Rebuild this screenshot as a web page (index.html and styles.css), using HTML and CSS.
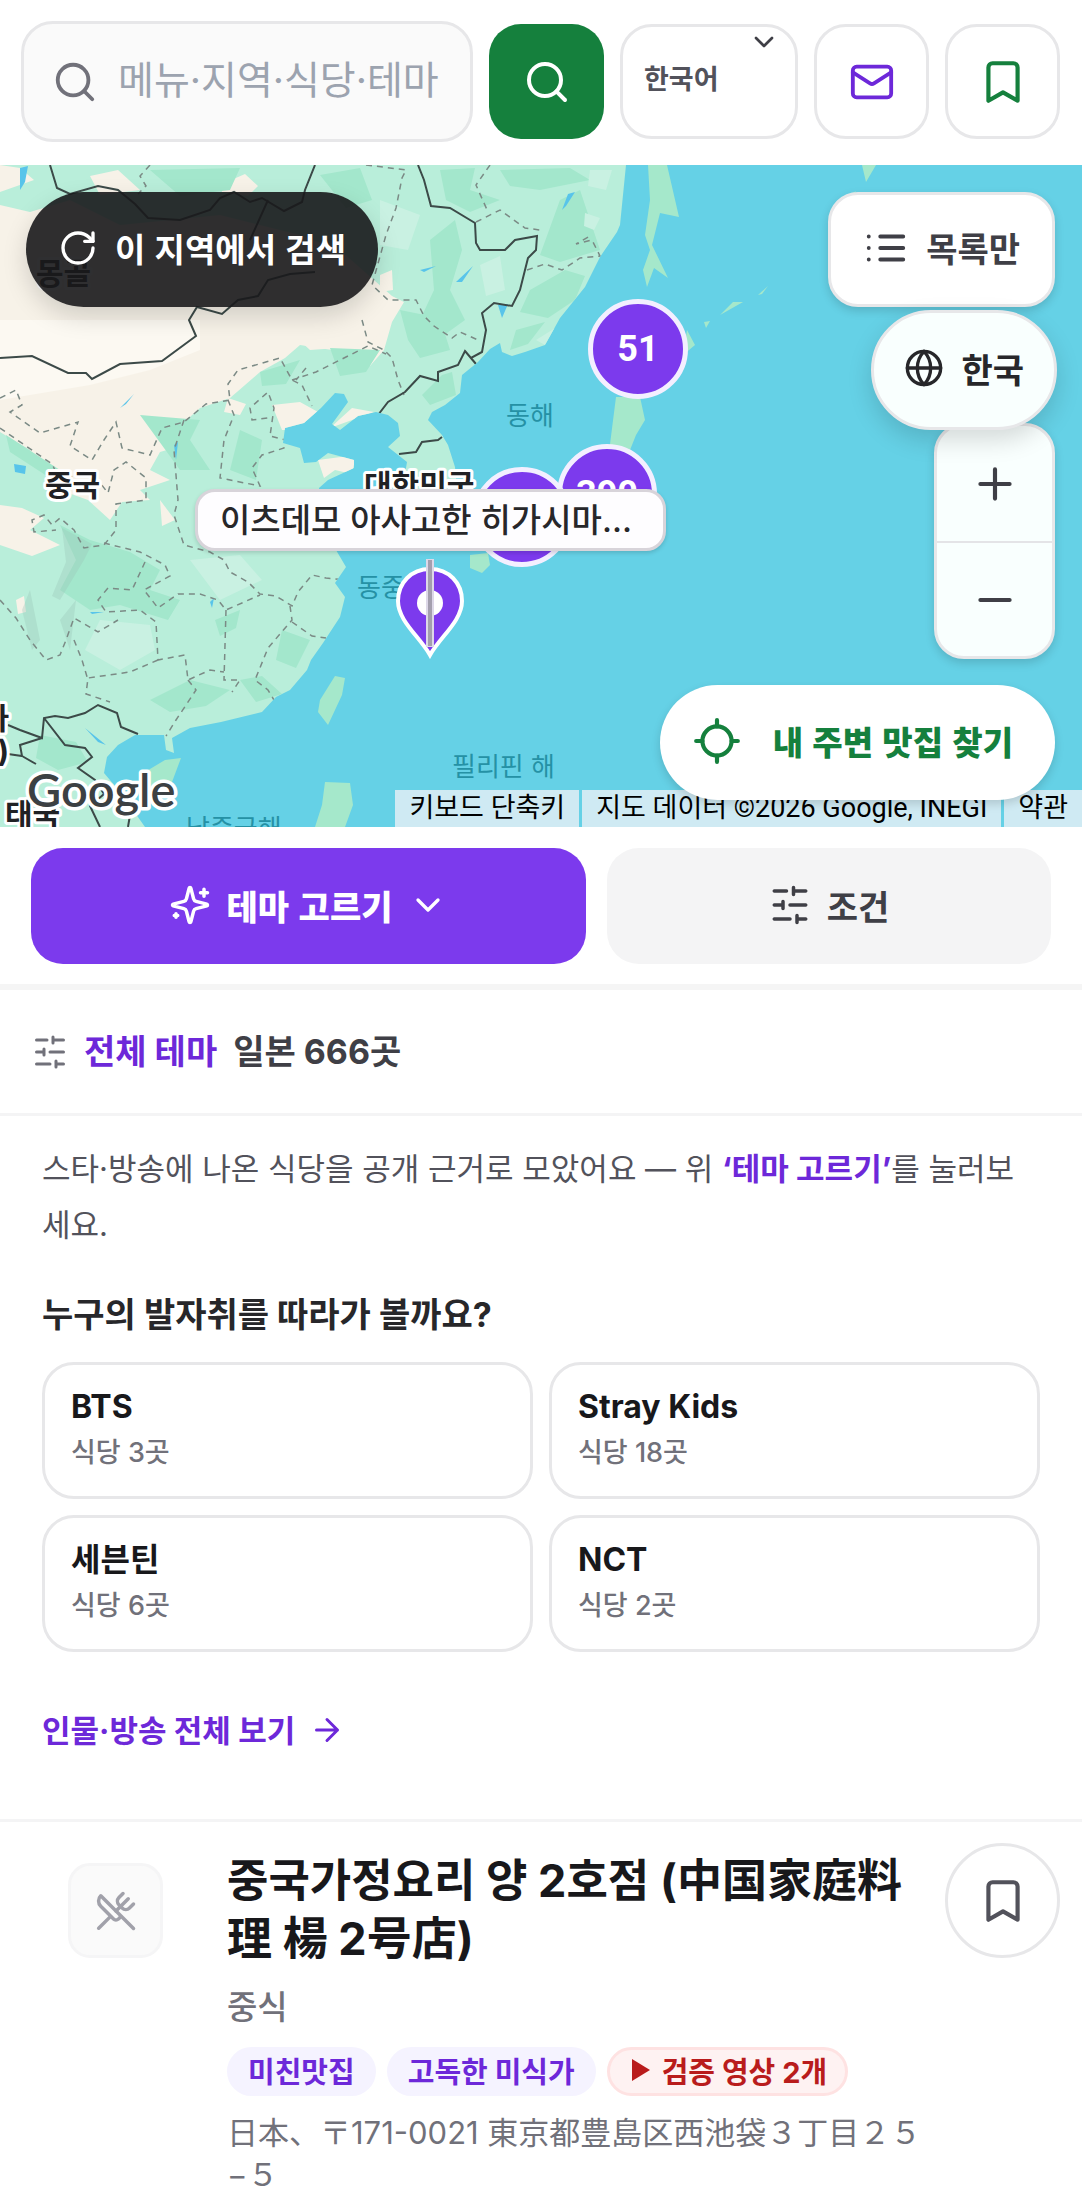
FILE: index.html
```html
<!DOCTYPE html>
<html lang="ko">
<head>
  <meta charset="UTF-8">
  <meta name="viewport" content="width=device-width, initial-scale=1.0">
  <title>맛집 지도</title>
  <link rel="stylesheet" href="styles.css">
</head>
<body>
  <!-- shared icons -->
  <svg class="sprite" aria-hidden="true">
    <symbol id="i-search" viewBox="0 0 24 24"><circle cx="11" cy="11" r="8"/><path d="m21 21-4.3-4.3"/></symbol>
    <symbol id="i-chevron" viewBox="0 0 24 24"><path d="m6 9 6 6 6-6"/></symbol>
    <symbol id="i-mail" viewBox="0 0 24 24"><rect x="2" y="4" width="20" height="16" rx="2"/><path d="m22 7-8.97 5.7a1.94 1.94 0 0 1-2.06 0L2 7"/></symbol>
    <symbol id="i-bookmark" viewBox="0 0 24 24"><path d="m19 21-7-4-7 4V5a2 2 0 0 1 2-2h10a2 2 0 0 1 2 2v16z"/></symbol>
    <symbol id="i-rotate" viewBox="0 0 24 24"><path d="M21 12a9 9 0 1 1-9-9c2.52 0 4.93 1 6.74 2.74L21 8"/><path d="M21 3v5h-5"/></symbol>
    <symbol id="i-list" viewBox="0 0 24 24"><path d="M3 6h.01M3 12h.01M3 18h.01M9 6h12M9 12h12M9 18h12"/></symbol>
    <symbol id="i-globe" viewBox="0 0 24 24"><circle cx="12" cy="12" r="10"/><path d="M12 2a14.5 14.5 0 0 0 0 20 14.5 14.5 0 0 0 0-20M2 12h20"/></symbol>
    <symbol id="i-plus" viewBox="0 0 24 24"><path d="M5 12h14M12 5v14"/></symbol>
    <symbol id="i-minus" viewBox="0 0 24 24"><path d="M5 12h14"/></symbol>
    <symbol id="i-locate" viewBox="0 0 24 24"><path d="M2 12h3M19 12h3M12 2v3M12 19v3"/><circle cx="12" cy="12" r="7"/></symbol>
    <symbol id="i-sparkles" viewBox="0 0 24 24"><path d="M9.937 15.5A2 2 0 0 0 8.5 14.063l-6.135-1.582a.5.5 0 0 1 0-.962L8.5 9.936A2 2 0 0 0 9.937 8.5l1.582-6.135a.5.5 0 0 1 .963 0L14.063 8.5A2 2 0 0 0 15.5 9.937l6.135 1.581a.5.5 0 0 1 0 .964L15.5 14.063a2 2 0 0 0-1.437 1.437l-1.582 6.135a.5.5 0 0 1-.963 0z"/><path d="M20 3v4M22 5h-4M4 17v2M5 18H3"/></symbol>
    <symbol id="i-sliders" viewBox="0 0 24 24"><path d="M21 4h-7M10 4H3M21 12h-9M8 12H3M21 20h-5M12 20H3M14 2v4M8 10v4M16 18v4"/></symbol>
    <symbol id="i-arrow" viewBox="0 0 24 24"><path d="M5 12h14M12 5l7 7-7 7"/></symbol>
    <symbol id="i-utensils" viewBox="0 0 24 24"><path d="m16 2-2.3 2.3a3 3 0 0 0 0 4.2l1.8 1.8a3 3 0 0 0 4.2 0L22 8"/><path d="M15 15 3.3 3.3a4.2 4.2 0 0 0 0 6l7.3 7.3c.7.7 2 .7 2.8 0L15 15Zm0 0 7 7"/><path d="m2.1 21.8 6.4-6.3M19 5l-7 7"/></symbol>
  </svg>

  <header class="header">
    <form class="search">
      <label class="search-box">
        <svg class="icon icon-46"><use href="#i-search"/></svg>
        <input class="search-input" type="text" placeholder="메뉴·지역·식당·테마" aria-label="메뉴·지역·식당·테마">
      </label>
      <button class="square-btn square-btn-green" type="button" aria-label="검색"><svg class="icon icon-48"><use href="#i-search"/></svg></button>
    </form>
    <div class="lang">
      <select class="lang-select" aria-label="언어">
        <option>한국어</option>
      </select>
      <svg class="icon icon-32 lang-chevron"><use href="#i-chevron"/></svg>
    </div>
    <button class="square-btn square-btn-purple" type="button" aria-label="문의"><svg class="icon icon-46"><use href="#i-mail"/></svg></button>
    <button class="square-btn square-btn-saved" type="button" aria-label="저장한 곳"><svg class="icon icon-50"><use href="#i-bookmark"/></svg></button>
  </header>

  <section class="map">
    <svg class="map-canvas" viewBox="0 165 1082 662" preserveAspectRatio="xMidYMid slice">
      <defs>
        <clipPath id="mainland">
          <path d="M0 165H626L620 225 617 232 600 257 585 287 560 318 545 345 525 352 512 356 502 352 500 343 490 349 478 362 462 375 460 393 445 405 432 412 428 420 442 435 448 445 455 467 457 490 440 512 410 512 404 480 407 462 388 447 400 436 398 423 388 415 376 412 358 416 340 430 332 424 348 402 344 394 335 393 321 408 304 423 285 428 283 443 300 448 304 463 316 462 328 453 354 460 354 468 328 480 319 488 322 520 336 550 346 567 335 583 345 597 340 617 323 643 311 660 307 670 290 690 276 697 262 712 221 722 190 728 172 738 174 753 166 750 164 735 135 735 118 745 107 757 104 773 121 793 145 827H0Z"/>
        </clipPath>
      </defs>
      <rect y="165" width="1082" height="662" fill="#65d1e6"/>
      <g clip-path="url(#mainland)">
        <rect y="165" width="640" height="662" fill="#b9eeda"/>
        <g fill="#f7f2e8">
          <path d="M0 205 30 212 70 200 120 225 220 215 300 235 340 250 392 296 404 302 392 322 384 350 370 366 345 352 300 345 285 358 260 372 230 398 200 408 182 424 184 445 160 452 150 470 170 480 140 490 150 500 122 502 110 520 88 500 60 490 30 450 0 432Z"/>
          <path d="M0 505 22 508 44 518 30 530 60 545 32 556 0 545ZM222 184 245 174 258 186 248 196 222 192ZM380 275 392 270 393 290 380 292ZM286 328 360 305 384 330 366 346 310 350ZM160 500 175 520 162 526ZM318 460 356 455 352 474 335 470 324 478ZM0 165 20 168 34 180 0 192ZM90 176 118 170 140 190 100 195Z"/>
          <path d="M272 405 300 402 318 412 298 430 282 430ZM330 428 352 408 374 412ZM228 398 246 404 240 415 224 412ZM330 635 345 620 336 640 322 648ZM16 600 24 596 26 612 18 614Z"/>
        </g>
        <path d="M0 320H200V350L150 370 90 385 0 400Z" fill="#fcf9f2"/>
        <g fill="#a3e7cc">
          <path d="M430 240 455 220 462 250 450 290 465 320 440 338 420 320 434 290ZM560 200 580 190 590 220 600 250 560 262 540 255ZM530 290 565 270 585 276 575 300 548 318 520 312ZM400 310 440 318 450 350 420 358 408 340ZM150 170 240 168 230 190 180 196ZM320 175 360 168 372 200 346 208ZM440 170 475 168 470 190 500 200 470 212 446 200Z"/>
          <path d="M60 525 90 540 130 552 160 570 150 590 180 600 168 620 120 605 90 610 60 590 76 560ZM6 435 60 470 50 478 10 452ZM215 620 240 610 236 628 220 636ZM150 700 190 680 230 690 206 706 170 712ZM240 680 262 676 282 694 256 702ZM40 735 76 742 88 762 58 770 36 758ZM282 630 310 640 296 668 276 660ZM140 415 200 420 190 440 210 470 180 470ZM240 430 262 440 256 480 230 470Z"/>
          <path d="M442 375 452 372 456 395 430 405 422 395ZM500 170 570 168 590 180 540 190 510 186ZM516 330 545 322 528 344 510 350ZM260 372 300 360 286 384 262 386ZM330 348 380 350 366 372 340 376Z"/>
        </g>
        <g fill="#c9f1e2">
          <path d="M100 620 150 625 155 650 120 670 85 650ZM190 560 240 555 262 580 220 600ZM380 200 420 215 408 250 380 245ZM480 265 500 256 505 290 486 296ZM590 170 612 170 606 190 588 186ZM585 213 600 218 594 230 584 226ZM560 325 545 345 536 340Z"/>
        </g>
        <g fill="#9cc6b6" opacity=".35">
          <path d="M62 528 92 544 84 560 60 600 52 596 66 562ZM30 590 40 640 32 650 22 610ZM60 620 76 600 70 650Z"/>
        </g>
        <g fill="#58c4ea">
          <path d="M20 168 28 166 25 182 20 190ZM14 464 26 466 25 474 15 472ZM120 408 134 394 126 404ZM498 305 508 304 502 318ZM568 194 575 192 566 206 562 210ZM420 270 436 266 424 272ZM456 282 473 266 462 282ZM174 445 178 442 176 460ZM85 728 106 745 98 742ZM90 612 104 612 92 614ZM210 602 214 598 212 608Z"/>
        </g>
        <g class="province">
          <path d="M0 398 16 390 22 405 10 412 40 433 78 422 70 446 92 460 104 440 116 422 122 448 150 455 162 428 184 422 206 404 230 400 228 384 238 370 280 358 292 380 302 385 312 406"/>
          <path d="M228 400 234 415 224 440 220 478 260 486 252 468 262 455 284 448 286 440 270 436 274 408 268 392 250 408 252 420 268 418"/>
          <path d="M0 428 52 464 60 480 90 470 108 493 114 470 126 462 146 478 146 500 116 504 116 530 104 545 84 548 74 530 60 518 52 525 44 515 32 520 34 532 56 530"/>
          <path d="M184 420 174 450 178 500 174 515 184 545 210 552 224 560 230 572 248 582 260 594 276 596 292 606 298 592 312 575 326 578 346 580"/>
          <path d="M104 543 140 552 165 565 170 576 144 590 158 608 178 594 200 594 218 600 226 610 260 595M226 610 224 680 240 680 232 692M290 606 292 620 268 648 255 680 268 690 274 700M292 622 312 636 326 638"/>
          <path d="M145 562 132 590 108 588 98 600 106 612 140 610 156 622 158 660 185 655 188 680 210 670 224 672M158 660 130 672 88 678 86 694 110 702M188 680 196 690 176 720 166 736"/>
          <path d="M0 600 16 618 30 640 46 660 60 655 66 640 74 618 98 632 118 620M74 640 82 660 88 680"/>
          <path d="M366 165 406 170 402 178 396 208 386 235 372 285 388 300 416 300 424 316 434 326 452 338 460 332 478 340M362 320 368 342 384 350 392 358 398 380 404 395M490 165 476 185 488 212M476 222 500 210 525 228 540 230M527 270 545 264 562 270 580 258 600 256 592 240 576 244 590 236"/>
          <path d="M150 165 140 176 146 186 138 194M292 380 316 372 340 360 368 346 386 354M306 368 296 380"/>
        </g>
        <g class="border">
          <path d="M50 165 57 188 70 194 98 186 118 190 135 204 148 218 180 220 210 210 220 198 234 192 250 202 262 198 284 211 302 202 305 190 315 165M268 200 250 240"/>
          <path d="M0 358 32 356 68 373 86 373 92 379 120 364 162 361 196 336 189 320 197 307 222 314 238 300 258 296 268 280 290 274 315 272"/>
          <path d="M418 165 424 180 431 206 450 208 475 223 476 243 480 250 505 250 515 240 537 236 536 250 528 258 520 290 512 306 494 303 482 313 486 330 482 352 471 358 465 351 458 365 438 372 438 381 420 376 405 392 388 402 378 415M465 351 476 364"/>
          <path d="M399 454 416 452 422 442 438 440 442 437M138 734 121 727 117 713 98 705 85 713 68 718 55 716 44 718 42 738 20 730 8 725M44 718 65 745 85 748 92 757 78 768 95 780 104 794 90 806 100 827M42 738 20 745 22 756 8 754M22 756 36 764M128 827 130 815"/>
        </g>
      </g>
      <g fill="#a5e8cb">
        <path d="M648 165H667L679 217 660 213 652 245 668 278 654 268 647 287 643 270 650 250 645 235 650 200Z"/>
        <path d="M687 330 695 345 683 355ZM616 397H640L645 420 636 435 630 450 608 460ZM720 315 733 302 743 302ZM758 295 768 286 762 294ZM704 322 710 321 706 328ZM862 165H876L866 182ZM844 198 856 191 850 200Z"/>
        <path d="M320 700 335 676 345 678 342 695 328 725 318 712ZM145 772 165 760 181 758 172 782 155 790 146 784ZM325 782 350 783 353 805 345 827H315L322 805ZM470 555 488 553 490 565 482 573 470 568Z"/>
      </g>
      <g class="map-country">
        <text x="36" y="284">몽골</text>
        <text x="45" y="496">중국</text>
        <text x="364" y="496">대한민국</text>
        <text x="5" y="825">태국</text>
        <text x="9" y="729" text-anchor="end">(미얀마</text>
        <text x="9" y="762" text-anchor="end">버마)</text>
      </g>
      <g class="map-sea">
        <text x="506" y="425">동해</text>
        <text x="357" y="597">동중국해</text>
        <text x="452" y="776">필리핀 해</text>
        <text x="186" y="838">남중국해</text>
      </g>
      <text class="map-logo" x="27" y="807">Google</text>
    </svg>

    <button class="cluster cluster-tokyo" type="button">390</button>
    <button class="cluster cluster-osaka" type="button">225</button>
    <button class="cluster cluster-hokkaido" type="button">51</button>
    <svg class="pin" viewBox="0 0 72 104">
      <path d="M36 14C17 14 4 28 4 46c0 20 22 36 32 54 10-18 32-34 32-54C68 28 55 14 36 14Z" fill="#7c3aed" stroke="#fff" stroke-width="4"/>
      <circle cx="36" cy="48" r="13" fill="#fff"/>
      <path d="M36 4v88" stroke="#ddd8e8" stroke-width="8"/>
      <path d="M36 5v86" stroke="#a49fae" stroke-width="4"/>
    </svg>
    <div class="pin-label">이츠데모 아사고한 히가시마…</div>

    <button class="area-btn" type="button"><svg class="icon icon-40"><use href="#i-rotate"/></svg>이 지역에서 검색</button>

    <div class="zoom">
      <button class="zoom-btn" type="button" aria-label="확대"><svg class="icon icon-50"><use href="#i-plus"/></svg></button>
      <button class="zoom-btn" type="button" aria-label="축소"><svg class="icon icon-50"><use href="#i-minus"/></svg></button>
    </div>
    <button class="list-btn" type="button"><svg class="icon icon-46"><use href="#i-list"/></svg>목록만</button>
    <button class="country-btn" type="button"><svg class="icon icon-40"><use href="#i-globe"/></svg>한국</button>

    <div class="credits">
      <button class="credit" type="button">키보드 단축키</button>
      <span class="credit">지도 데이터 ©2026 Google, INEGI</span>
      <a class="credit" href="#">약관</a>
    </div>
    <button class="nearby-btn" type="button"><svg class="icon icon-50"><use href="#i-locate"/></svg>내 주변 맛집 찾기</button>
  </section>

  <main>
    <div class="toolbar">
      <button class="tool tool-theme" type="button">
        <svg class="icon icon-42"><use href="#i-sparkles"/></svg>테마 고르기<svg class="icon icon-40"><use href="#i-chevron"/></svg>
      </button>
      <button class="tool tool-filter" type="button"><svg class="icon icon-42"><use href="#i-sliders"/></svg>조건</button>
    </div>

    <div class="summary">
      <svg class="icon icon-36"><use href="#i-sliders"/></svg>
      <strong class="summary-theme">전체 테마</strong>
      <span class="summary-count">일본 666곳</span>
    </div>

    <section class="intro">
      <p class="intro-text">스타·방송에 나온 식당을 공개 근거로 모았어요 — 위 <b class="intro-mark">‘테마 고르기’</b>를 눌러보세요.</p>
      <h2 class="intro-title">누구의 발자취를 따라가 볼까요?</h2>
      <div class="people">
        <a class="person" href="#"><span class="person-name">BTS</span><span class="person-count">식당 3곳</span></a>
        <a class="person" href="#"><span class="person-name">Stray Kids</span><span class="person-count">식당 18곳</span></a>
        <a class="person" href="#"><span class="person-name">세븐틴</span><span class="person-count">식당 6곳</span></a>
        <a class="person" href="#"><span class="person-name">NCT</span><span class="person-count">식당 2곳</span></a>
      </div>
      <a class="more" href="#"><span class="more-text">인물·방송 전체 보기</span><svg class="icon icon-36"><use href="#i-arrow"/></svg></a>
    </section>

    <article class="place">
      <div class="thumb"><svg class="icon icon-42"><use href="#i-utensils"/></svg></div>
      <div class="place-body">
        <h3 class="place-name">중국가정요리 양 2호점 (中国家庭料理 楊 2号店)</h3>
        <p class="place-kind">중식</p>
        <div class="chips">
          <span class="chip">미친맛집</span>
          <span class="chip">고독한 미식가</span>
          <span class="chip chip-video"><svg class="play" viewBox="0 0 18 22"><path d="M0 0 18 11 0 22Z"/></svg>검증 영상 2개</span>
        </div>
        <p class="place-address">日本、〒171-0021 東京都豊島区西池袋３丁目２５−５</p>
      </div>
      <button class="save-btn" type="button" aria-label="저장"><svg class="icon icon-50"><use href="#i-bookmark"/></svg></button>
    </article>
  </main>
</body>
</html>
```
FILE: styles.css
```css
* {
  box-sizing: border-box;
}
body {
  margin: 0;
  background: #fff;
  color: #18181b;
  font-family: Inter, 'Noto Sans CJK KR', sans-serif;
  overflow-x: hidden;
}
button, input, select {
  font-family: inherit;
  margin: 0;
}
button {
  display: flex;
  align-items: center;
  justify-content: center;
  padding: 0;
  border: 0;
  cursor: pointer;
}
a {
  text-decoration: none;
}
h2, h3, p {
  margin: 0;
}
.sprite {
  position: absolute;
  width: 0;
  height: 0;
}

/* icons */
.icon {
  flex: none;
  fill: none;
  stroke: currentColor;
  stroke-width: 2;
  stroke-linecap: round;
  stroke-linejoin: round;
}
.icon-32 { width: 32px; height: 32px; }
.icon-36 { width: 36px; height: 36px; }
.icon-40 { width: 40px; height: 40px; }
.icon-42 { width: 42px; height: 42px; }
.icon-46 { width: 46px; height: 46px; }
.icon-48 { width: 48px; height: 48px; }
.icon-50 { width: 50px; height: 50px; }

/* header */
.header {
  display: flex;
  align-items: center;
  gap: 16px;
  padding: 21px 22px 23px 21px;
}
.search {
  flex: 1;
  display: flex;
  align-items: center;
  gap: 16px;
  min-width: 0;
}
.search-box {
  flex: 1;
  display: flex;
  align-items: center;
  gap: 20px;
  min-width: 0;
  height: 121px;
  padding: 0 16px 0 28px;
  border: 3px solid #e7e7e9;
  border-radius: 32px;
  background: #fafafa;
  color: #71717a;
}
.search-input {
  flex: 1;
  min-width: 0;
  padding: 0 0 4px;
  border: 0;
  outline: 0;
  background: none;
  color: #18181b;
  font-size: 39px;
}
.search-input::placeholder {
  color: #9ca3af;
}
.square-btn {
  flex: none;
  width: 115px;
  height: 115px;
  border: 3px solid #e7e7e9;
  border-radius: 32px;
  background: #fff;
}
.square-btn-green {
  border: 0;
  background: #15803d;
  color: #fff;
}
.square-btn-purple {
  color: #6d28d9;
}
.square-btn-saved {
  color: #15803d;
}
.lang {
  position: relative;
}
.lang-select {
  display: block;
  width: 178px;
  height: 115px;
  padding: 0 21px 4px;
  border: 3px solid #e7e7e9;
  border-radius: 32px;
  background: #fff;
  color: #52525b;
  font-size: 27px;
  font-weight: 700;
  appearance: none;
}
.lang-chevron {
  position: absolute;
  top: 2px;
  right: 18px;
  color: #3f3f46;
  pointer-events: none;
}

/* map */
.map {
  position: relative;
  height: 662px;
  overflow: hidden;
  background: #65d1e6;
}
.map-canvas {
  display: block;
  width: 100%;
  height: 100%;
}
.border {
  fill: none;
  stroke: #3c4a48;
  stroke-width: 2;
}
.province {
  fill: none;
  stroke: #7b8a85;
  stroke-width: 1.5;
  stroke-dasharray: 6 5;
}
.map-country {
  fill: #202124;
  stroke: #fff;
  stroke-width: 6;
  stroke-linejoin: round;
  paint-order: stroke;
  font-size: 30px;
  font-weight: 700;
}
.map-sea {
  fill: #2591a5;
  font-size: 26px;
}
.map-logo {
  fill: #3c4043;
  stroke: #fff;
  stroke-width: 7;
  stroke-linejoin: round;
  paint-order: stroke;
  font-family: Lato, sans-serif;
  font-size: 47px;
  font-weight: 600;
}
.cluster {
  position: absolute;
  width: 100px;
  height: 100px;
  border: 5px solid #f3efff;
  border-radius: 50%;
  background: #7c3aed;
  color: #fff;
  font-family: Roboto, sans-serif;
  font-size: 36px;
  font-weight: 700;
}
.cluster-hokkaido { left: 588px; top: 134px; }
.cluster-tokyo { left: 557px; top: 279px; }
.cluster-osaka { left: 472px; top: 302px; }
.pin {
  position: absolute;
  left: 394px;
  top: 390px;
  width: 72px;
  height: 104px;
}
.pin-label {
  position: absolute;
  left: 195px;
  top: 324px;
  width: 471px;
  padding: 0 22px;
  border: 3px solid #d8d4da;
  border-radius: 20px;
  background: #fefdff;
  color: #27272a;
  font-size: 33px;
  font-weight: 500;
  line-height: 56px;
  white-space: nowrap;
  box-shadow: 0 2px 4px rgba(0, 0, 0, 0.15);
}
.area-btn, .list-btn, .country-btn, .nearby-btn {
  position: absolute;
  gap: 17px;
  height: 115px;
  padding: 0 32px 4px;
  border-radius: 58px;
  font-family: 'Noto Sans CJK KR', sans-serif;
  font-size: 34px;
  font-weight: 700;
  white-space: nowrap;
}
.area-btn {
  left: 26px;
  top: 27px;
  background: rgba(24, 24, 27, 0.9);
  color: #fff;
  font-size: 33px;
  box-shadow: 0 10px 24px rgba(0, 0, 0, 0.15);
}
.list-btn {
  right: 27px;
  top: 27px;
  border: 3px solid #e7e7e9;
  border-radius: 30px;
  background: #fff;
  color: #3f3f46;
  box-shadow: 0 4px 10px rgba(0, 0, 0, 0.15);
}
.country-btn {
  right: 25px;
  top: 145px;
  height: 120px;
  padding: 0 30px 4px;
  border: 3px solid #e7e7e9;
  border-radius: 60px;
  background: #f9fffe;
  color: #27272a;
  box-shadow: 0 10px 24px rgba(0, 0, 0, 0.15);
}
.zoom {
  position: absolute;
  right: 27px;
  top: 258px;
  width: 121px;
  border: 3px solid #e7e7e9;
  border-radius: 30px;
  overflow: hidden;
  background: #f9fffe;
  box-shadow: 0 4px 10px rgba(0, 0, 0, 0.15);
}
.zoom-btn {
  width: 100%;
  height: 115px;
  background: none;
  color: #3f3f46;
}
.zoom-btn + .zoom-btn {
  border-top: 2px solid #e4e4e7;
}
.nearby-btn {
  right: 27px;
  bottom: 27px;
  gap: 31px;
  padding: 0 42px 4px 32px;
  background: #fff;
  color: #15803d;
  font-size: 33px;
  font-weight: 900;
  box-shadow: 0 4px 10px rgba(0, 0, 0, 0.15);
}
.credits {
  position: absolute;
  right: 0;
  bottom: 0;
  display: flex;
  gap: 3px;
}
.credit {
  padding: 0 14px;
  background: #cfeaf3;
  color: #000;
  font-family: Roboto, 'Noto Sans CJK KR', sans-serif;
  font-size: 27px;
  line-height: 37px;
  white-space: nowrap;
}

/* toolbar */
.toolbar {
  display: flex;
  gap: 21px;
  padding: 21px 31px 20px;
  border-bottom: 6px solid #f5f5f5;
}
.tool {
  gap: 16px;
  height: 116px;
  padding: 0 0 2px;
  border-radius: 32px;
  font-family: 'Noto Sans CJK KR', sans-serif;
  font-size: 34px;
  font-weight: 700;
}
.tool-theme {
  flex: 5;
  background: #7c3aed;
  color: #fff;
  font-weight: 900;
}
.tool-filter {
  flex: 4;
  background: #f4f4f5;
  color: #3f3f46;
}
.summary {
  display: flex;
  align-items: center;
  gap: 16px;
  height: 126px;
  padding: 0 32px;
  border-bottom: 3px solid #f4f4f5;
  color: #71717a;
  font-size: 34px;
}
.summary-theme, .summary-count, .more-text {
  padding-bottom: 4px;
}
.summary-theme {
  color: #6d28d9;
}
.summary-count {
  color: #3f3f46;
  font-weight: 700;
}

/* intro */
.intro {
  padding: 25px 42px 31px;
  border-bottom: 3px solid #f4f4f5;
}
.intro-text {
  color: #52525b;
  font-size: 31px;
  line-height: 56px;
}
.intro-mark {
  color: #6d28d9;
}
.intro-title {
  margin: 38px 0 23px;
  color: #27272a;
  font-size: 34px;
  line-height: 48px;
}
.people {
  display: grid;
  grid-template-columns: 1fr 1fr;
  gap: 16px;
}
.person {
  height: 137px;
  padding: 21px 26px;
  border: 3px solid #e7e7e9;
  border-radius: 32px;
}
.person-name, .person-count {
  display: block;
}
.person-name {
  color: #18181b;
  font-size: 32px;
  font-weight: 700;
  line-height: 42px;
}
.person-count {
  margin-top: 5px;
  color: #71717a;
  font-size: 27px;
  font-weight: 500;
  line-height: 40px;
}
.more {
  display: inline-flex;
  align-items: center;
  gap: 14px;
  height: 116px;
  margin-top: 20px;
  color: #6d28d9;
  font-size: 31px;
  font-weight: 700;
}

/* place */
.place {
  display: flex;
  align-items: flex-start;
  gap: 16px;
  padding: 21px 22px 32px 68px;
}
.thumb {
  flex: none;
  display: flex;
  align-items: center;
  justify-content: center;
  width: 95px;
  height: 95px;
  margin: 20px 48px 0 0;
  border: 3px solid #f5f5f6;
  border-radius: 22px;
  background: #fafafa;
  color: #a1a1aa;
}
.place-body {
  flex: 1;
  min-width: 0;
  padding-top: 9px;
}
.place-name {
  font-size: 45px;
  font-weight: 700;
  line-height: 58px;
}
.place-kind {
  margin-top: 16px;
  color: #71717a;
  font-size: 33px;
  font-weight: 500;
  line-height: 46px;
}
.chips {
  display: flex;
  flex-wrap: wrap;
  gap: 11px;
  margin-top: 17px;
}
.chip {
  display: flex;
  align-items: center;
  height: 49px;
  padding: 0 21px 4px;
  border-radius: 25px;
  background: #f5f3ff;
  color: #6d28d9;
  font-size: 29px;
  font-weight: 700;
}
.chip-video {
  gap: 12px;
  padding: 0 18px 4px 22px;
  border: 3px solid #fee2e2;
  background: #fef2f2;
  color: #b91c1c;
}
.play {
  width: 18px;
  height: 22px;
  fill: currentColor;
}
.place-address {
  margin-top: 16px;
  color: #71717a;
  font-family: Inter, 'Noto Sans CJK JP', sans-serif;
  font-size: 31px;
  line-height: 42px;
}
.save-btn {
  flex: none;
  width: 115px;
  height: 115px;
  border: 3px solid #e7e7e9;
  border-radius: 50%;
  background: #fff;
  color: #52525b;
}
```
